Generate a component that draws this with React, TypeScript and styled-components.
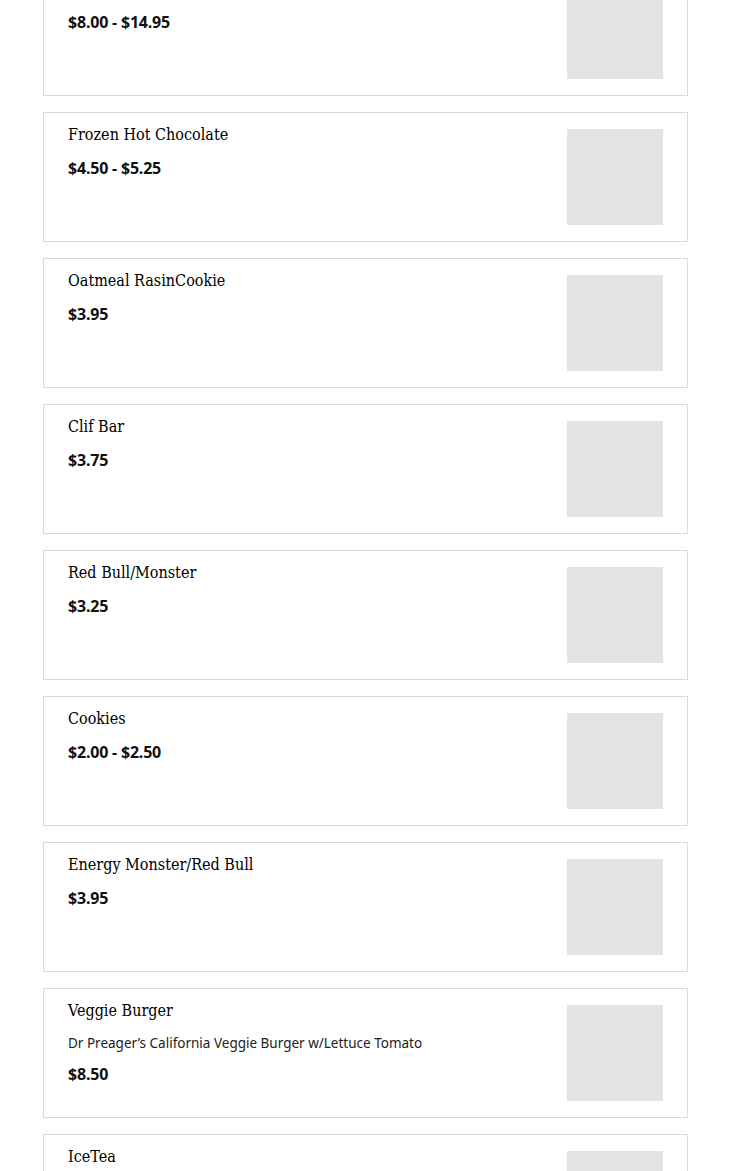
import React from "react";
import styled, { createGlobalStyle } from "styled-components";

const Global = createGlobalStyle`
  html, body { margin: 0; padding: 0; background: #fff; }
  body { font-family: "Open Sans", sans-serif; color: #111; }
`;

const List = styled.div`
  display: flex;
  flex-direction: column;
  gap: 16px;
  margin: -34px 42px 0 43px;
`;

const Card = styled.div`
  display: flex;
  justify-content: space-between;
  gap: 16px;
  border: 1px solid #d9d9d9;
  padding: 16px 24px;
  min-height: 96px;
  background: #fff;
`;

const Info = styled.div`
  display: flex;
  flex-direction: column;
  gap: 10px;
  margin-top: -4px;
`;

const Title = styled.div`
  font-family: "DejaVu Serif Condensed", "DejaVu Serif", serif;
  font-size: 16px;
  line-height: 20px;
  margin-bottom: 2px;
  color: #000;
`;

const Desc = styled.div`
  font-family: "Noto Sans", sans-serif;
  font-size: 13.5px;
  line-height: 20px;
  color: #222;
`;

const Price = styled.div`
  font-family: "Noto Sans", sans-serif;
  font-weight: 700;
  font-size: 16px;
  line-height: 20px;
  letter-spacing: -0.2px;
  margin-top: 1px;
  color: #111;
`;

const Thumb = styled.div`
  flex: 0 0 96px;
  width: 96px;
  height: 96px;
  background: #e3e3e3;
`;

type Item = { title: string; price: string; desc?: string };

const items: Item[] = [
  { title: "Smoothies", price: "$8.00 - $14.95" },
  { title: "Frozen Hot Chocolate", price: "$4.50 - $5.25" },
  { title: "Oatmeal RasinCookie", price: "$3.95" },
  { title: "Clif Bar", price: "$3.75" },
  { title: "Red Bull/Monster", price: "$3.25" },
  { title: "Cookies", price: "$2.00 - $2.50" },
  { title: "Energy Monster/Red Bull", price: "$3.95" },
  {
    title: "Veggie Burger",
    desc: "Dr Preager’s California Veggie Burger w/Lettuce Tomato",
    price: "$8.50",
  },
  { title: "IceTea", price: "$3.00" },
];

export default function App() {
  return (
    <>
      <Global />
      <List>
        {items.map((it) => (
          <Card key={it.title}>
            <Info>
              <Title>{it.title}</Title>
              {it.desc && <Desc>{it.desc}</Desc>}
              <Price>{it.price}</Price>
            </Info>
            <Thumb />
          </Card>
        ))}
      </List>
    </>
  );
}
